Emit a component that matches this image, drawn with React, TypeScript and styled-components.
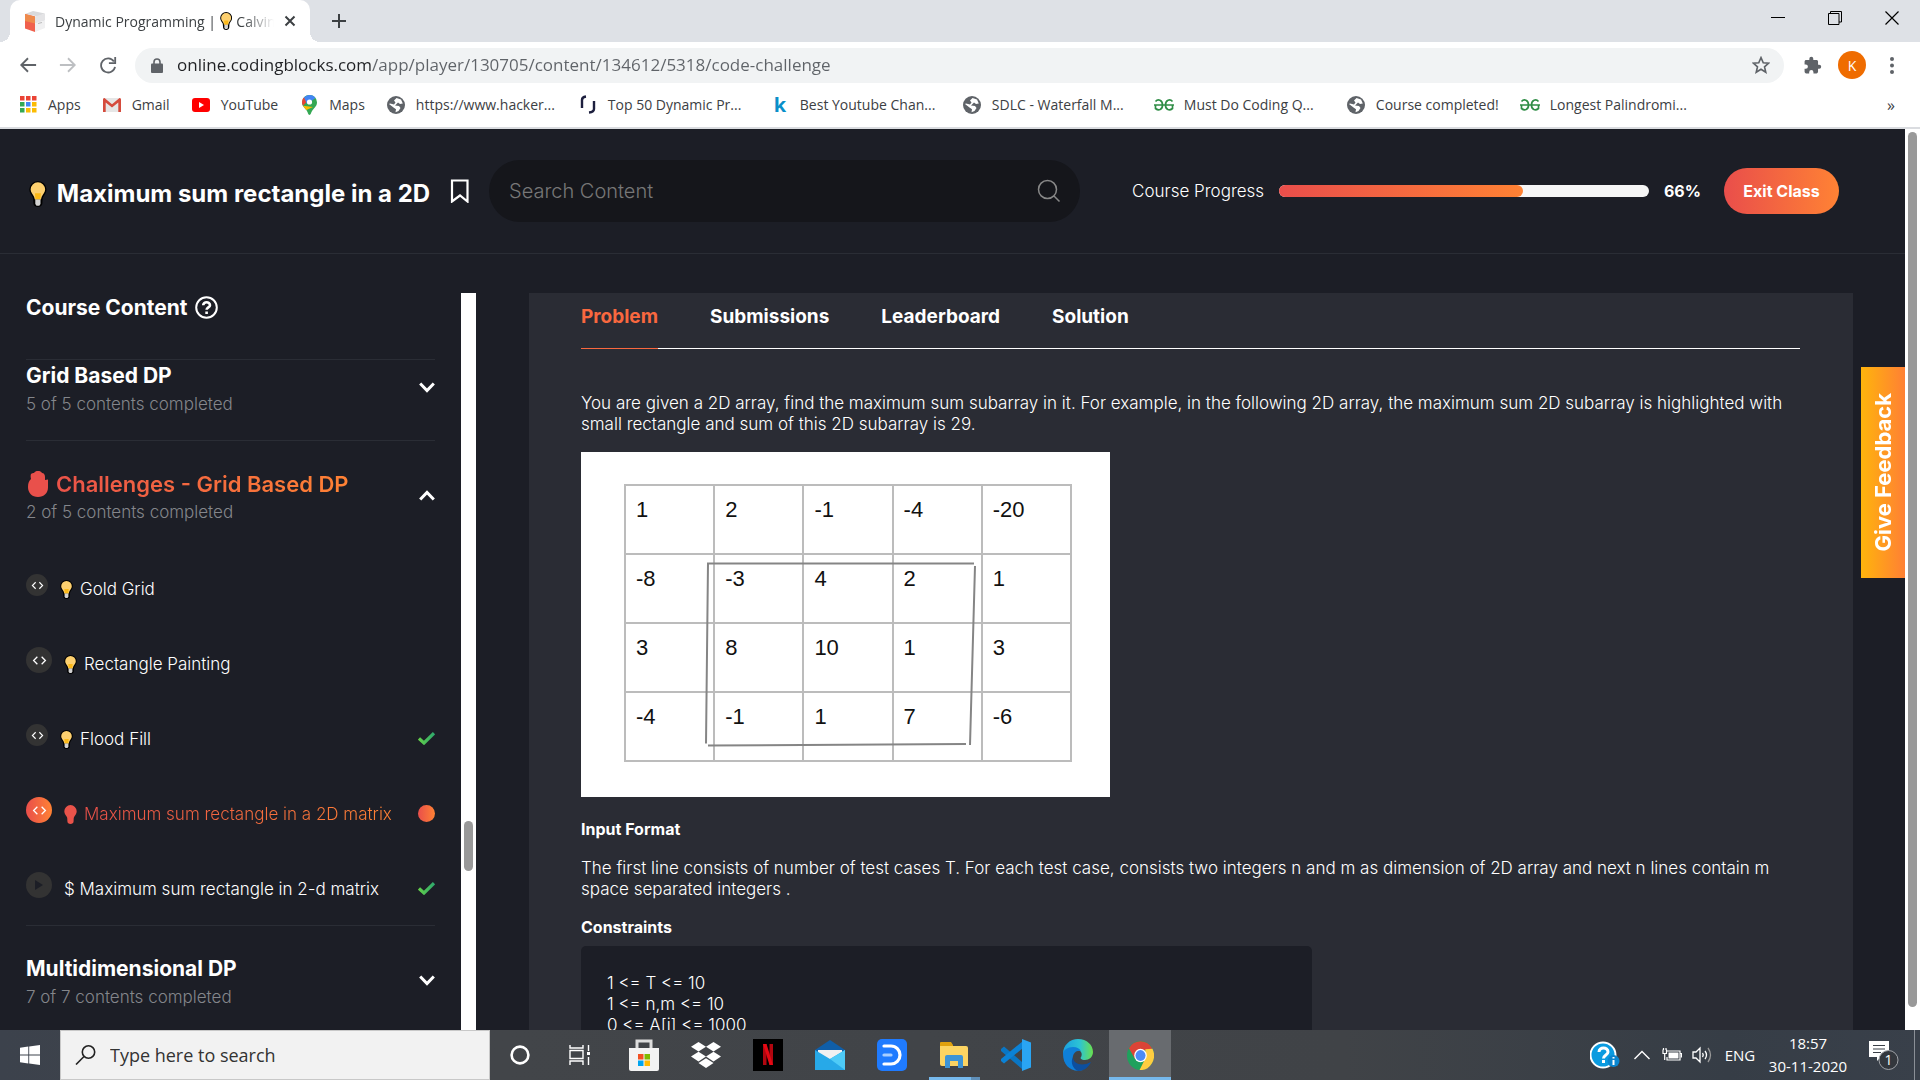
import React from "react";
import styled, { createGlobalStyle, css } from "styled-components";

const ui = `"Open Sans", "Noto Sans", sans-serif`;
const brand = `Inter, "Noto Sans", sans-serif`;
const warm = "linear-gradient(90deg, #e94e4b, #ff8234)";

const GlobalStyle = createGlobalStyle`
  *, *::before, *::after { box-sizing: border-box; }
  body { margin: 0; background: #1c1e26; }
  button { margin: 0; padding: 0; border: 0; background: none; color: inherit; font: inherit; text-align: inherit; cursor: pointer; }
  input { margin: 0; padding: 0; border: 0; background: none; outline: 0; min-width: 0; }
  a { color: inherit; text-decoration: none; }
  h1, h2, h3, p, ul, figure { margin: 0; padding: 0; }
  ul { list-style: none; }
  svg { display: block; flex: none; }
`;

const Desktop = styled.div`
  display: flex;
  flex-direction: column;
  height: 100vh;
  overflow: hidden;
`;

/* ---------- browser window ---------- */

const Chrome = styled.header`
  flex: none;
  background: #fff;
  border-bottom: 2px solid #dadce0;
  font-family: ${ui};
  color: #3c4043;
`;
const TabStrip = styled.div`
  display: flex;
  height: 42px;
  padding-left: 10px;
  background: #dee1e6;
`;
const BrowserTab = styled.div`
  position: relative;
  display: flex;
  align-items: center;
  gap: 10px;
  width: 300px;
  padding: 0 14px 0 14px;
  background: #fff;
  border-radius: 10px 10px 0 0;
  font-size: 14px;
  &::before, &::after {
    content: "";
    position: absolute;
    bottom: 0;
    width: 10px;
    height: 10px;
  }
  &::before { left: -10px; background: radial-gradient(circle at 0 0, transparent 10px, #fff 10px); }
  &::after { right: -10px; background: radial-gradient(circle at 100% 0, transparent 10px, #fff 10px); }
`;
const TabTitle = styled.span`
  display: flex;
  flex: 1;
  align-items: center;
  gap: 4px;
  overflow: hidden;
  white-space: nowrap;
  mask-image: linear-gradient(90deg, #000 86%, transparent 100%);
`;
const StripButton = styled.button`
  display: grid;
  place-items: center;
  width: 57px;
`;
const WindowButtons = styled.div`
  display: flex;
  height: 36px;
  margin-left: auto;
`;
const Toolbar = styled.div`
  display: flex;
  align-items: center;
  height: 46px;
  padding: 0 8px;
`;
const ToolButton = styled.button`
  display: grid;
  place-items: center;
  width: 40px;
  height: 36px;
`;
const AddressBar = styled.label`
  display: flex;
  flex: 1;
  align-items: center;
  gap: 14px;
  height: 35px;
  margin: 0 8px 0 7px;
  padding: 0 14px 0 16px;
  border-radius: 18px;
  background: #f1f3f4;
`;
const AddressInput = styled.input`
  flex: 1;
  padding-bottom: 2px;
  font: 17px ${ui};
  color: transparent;
  background: linear-gradient(90deg, #202124 195px, #5f6368 195px);
  background-clip: text;
`;
const Avatar = styled.span`
  display: grid;
  place-items: center;
  width: 28px;
  height: 28px;
  border-radius: 50%;
  background: #ef6c00;
  color: #fff;
  font-size: 14px;
`;
const Bookmarks = styled.nav`
  display: flex;
  align-items: center;
  gap: 21px;
  height: 39px;
  padding: 0 25px 6px 18px;
  font-size: 14px;
  white-space: nowrap;
`;
const Bookmark = styled.a<{ $long?: boolean }>`
  display: grid;
  grid-template-columns: 20px 1fr;
  gap: 10px;
  align-items: center;
  justify-items: center;
  & > span { justify-self: start; }
  ${(p) => p.$long && css`width: 171px;`}
`;
const KLetter = styled.b`
  color: #0a8fc9;
  font-size: 20px;
  line-height: 20px;
`;
const More = styled.button`
  margin-left: auto;
  font-size: 16px;
`;

/* ---------- page ---------- */

const Viewport = styled.div`
  display: flex;
  flex: 1;
  min-height: 0;
`;
const Page = styled.div`
  position: relative;
  display: flex;
  flex: 1;
  flex-direction: column;
  min-width: 0;
  background: #1c1e26;
  color: #fff;
  font: 300 17px/21px ${brand};
`;
const Track = styled.div<{ $before: number }>`
  flex: none;
  width: 15px;
  padding: ${(p) => p.$before}px 3px 0;
  background: #fff;
`;
const Thumb = styled.div<{ $length: string }>`
  height: ${(p) => p.$length};
  border-radius: 5px;
  background: #999;
`;
const TopBar = styled.div`
  display: flex;
  flex: none;
  align-items: center;
  height: 125px;
  padding-right: 66px;
  border-bottom: 1px solid #2a2d35;
`;
const Lecture = styled.div`
  display: flex;
  flex: none;
  align-items: center;
  gap: 11px;
  width: 489px;
  padding-left: 29px;
`;
const LectureTitle = styled.h1`
  display: flex;
  align-items: center;
  gap: 10px;
  width: 408px;
  padding-top: 6px;
  overflow: hidden;
  font-size: 24px;
  font-weight: 700;
  line-height: 26px;
  white-space: nowrap;
`;
const SearchBox = styled.label`
  display: flex;
  flex: 592 1 0;
  align-items: center;
  height: 62px;
  padding: 0 19px 0 20px;
  border-radius: 31px;
  background: #15161b;
`;
const SearchInput = styled.input`
  flex: 1;
  color: #fff;
  font: 300 20px ${brand};
  &::placeholder { color: #777; opacity: 1; }
`;
const Progress = styled.div`
  display: flex;
  flex: 758 1 0;
  align-items: center;
  gap: 15px;
  padding-left: 52px;
  font-size: 17px;
`;
const Meter = styled.div`
  flex: 1;
  height: 12px;
  border-radius: 6px;
  background: #f6f6f6;
`;
const MeterFill = styled.div`
  height: 100%;
  border-radius: 6px;
  background: ${warm};
`;
const Percent = styled.b`
  font-size: 16px;
  font-weight: 700;
`;
const ExitButton = styled.button`
  width: 115px;
  height: 46px;
  margin-left: 8px;
  border-radius: 23px;
  background: ${warm};
  font-size: 16px;
  font-weight: 700;
  text-align: center;
`;
const Columns = styled.div`
  display: flex;
  flex: 1;
  min-height: 0;
  padding: 39px 52px 0 0;
`;
const Sidebar = styled.aside`
  flex: none;
  width: 461px;
  padding: 0 26px;
  overflow: hidden;
`;
const SidebarTitle = styled.h2`
  display: flex;
  align-items: center;
  gap: 7px;
  height: 66px;
  padding-bottom: 38px;
  font-size: 21px;
  font-weight: 700;
`;
const Section = styled.section<{ $tight?: boolean }>`
  padding-top: ${(p) => (p.$tight ? 2 : 29)}px;
  border-top: 1px solid #2a2d35;
`;
const SectionHeader = styled.button`
  display: flex;
  align-items: center;
  justify-content: space-between;
  width: 100%;
  padding-bottom: 22px;
  & > svg { margin-bottom: 6px; }
`;
const SectionName = styled.span<{ $active?: boolean }>`
  display: flex;
  align-items: center;
  gap: 8px;
  width: max-content;
  font-size: 21px;
  font-weight: 700;
  line-height: 28px;
  ${(p) =>
    p.$active &&
    css`
      padding-left: 2px;
      font-size: 22px;
      font-weight: 600;
      color: transparent;
      background: ${warm};
      background-clip: text;
    `}
`;
const SectionCount = styled.span`
  display: block;
  color: #84868b;
  line-height: 28px;
`;
const Lessons = styled.ul`
  padding-top: 2px;
`;
const Item = styled.a`
  display: flex;
  align-items: center;
  height: 75px;
  padding-top: 4px;
`;
const Badge = styled.span<{ $size: number; $active?: boolean }>`
  display: grid;
  flex: none;
  place-items: center;
  width: ${(p) => p.$size}px;
  height: ${(p) => p.$size}px;
  margin: 0 12px 9px 0;
  border-radius: 50%;
  background: ${(p) => (p.$active ? warm : "#333")};
`;
const ItemName = styled.span<{ $active?: boolean }>`
  display: flex;
  align-items: center;
  gap: 7px;
  white-space: nowrap;
  ${(p) =>
    p.$active &&
    css`
      color: transparent;
      background: ${warm};
      background-clip: text;
    `}
`;
const Status = styled.span`
  margin-left: auto;
  padding-bottom: 3px;
`;
const ActiveDot = styled.span`
  display: block;
  width: 17px;
  height: 17px;
  border-radius: 50%;
  background: ${warm};
`;
const Panel = styled.main`
  flex: 1;
  min-width: 0;
  margin-left: 53px;
  padding: 0 53px 0 52px;
  overflow: hidden;
  background: #2a2c34;
`;
const TabList = styled.div`
  display: flex;
  gap: 52px;
  margin-bottom: 44px;
  border-bottom: 1px solid #fff;
`;
const PanelTab = styled.button<{ $active?: boolean }>`
  margin-bottom: -1px;
  padding: 12px 0 19px;
  border-bottom: 1px solid ${(p) => (p.$active ? "#f9683f" : "#fff")};
  color: ${(p) => (p.$active ? "#f9683f" : "#fff")};
  font-size: 19px;
  font-weight: 700;
  line-height: 24px;
`;
const Figure = styled.figure`
  position: relative;
  width: 529px;
  margin: 17px 0 22px;
  padding: 32px 38px 35px 43px;
  background: #fff;
`;
const Matrix = styled.table`
  width: 448px;
  border-collapse: collapse;
  table-layout: fixed;
  color: #111;
  font: 22px/24px "Liberation Sans", Arial, sans-serif;
`;
const Cell = styled.td`
  height: 69px;
  padding: 12px 10px 0;
  border: 2px solid #bcbcbc;
  vertical-align: top;
`;
const Sketch = styled.svg`
  position: absolute;
  inset: 0;
`;
const Heading = styled.h3`
  margin-bottom: 18px;
  font-size: 16px;
  font-weight: 700;
  line-height: 21px;
`;
const Constraints = styled.div`
  margin-top: 17px;
  & > ${Heading} { margin-bottom: 8px; }
`;
const Code = styled.div`
  width: 60%;
  min-height: 140px;
  padding: 27px 26px;
  border-radius: 5px;
  background: #1c1e26;
`;
const Feedback = styled.button`
  position: absolute;
  top: 238px;
  right: 0;
  display: grid;
  place-items: center;
  width: 44px;
  height: 211px;
  background: linear-gradient(90deg, #ffb40c, #ff8034);
  font-size: 22px;
  font-weight: 700;
`;
const Sideways = styled.span`
  writing-mode: vertical-rl;
  rotate: 180deg;
`;

/* ---------- taskbar ---------- */

const Taskbar = styled.footer`
  display: flex;
  flex: none;
  height: 50px;
  background: linear-gradient(90deg, #3c424c 0, #424549 26%, #404347 70%, #363d46 90%, #39404a 100%);
  color: #fff;
  font: 15px/23px ${ui};
`;
const TaskButton = styled.button<{ $width: number; $on?: boolean }>`
  display: grid;
  place-items: center;
  width: ${(p) => p.$width}px;
  ${(p) =>
    p.$on &&
    css`
      background: #686b6f;
      border-bottom: 3px solid #76b9ed;
      padding-top: 3px;
    `}
`;
const Pinned = styled.div`
  display: flex;
  margin-left: 3px;
`;
const Running = styled.span`
  display: grid;
  place-items: center;
  width: 51px;
  height: 50px;
  padding-top: 3px;
  border-bottom: 3px solid;
  border-image: linear-gradient(90deg, #76b9ed 41px, #5f8fb8 41px) 1;
`;
const WinSearch = styled.label`
  display: flex;
  align-items: center;
  gap: 14px;
  width: 430px;
  padding: 0 14px;
  border: 1px solid #c8c8c8;
  background: #f2f2f2;
`;
const WinSearchInput = styled.input`
  flex: 1;
  font: 18px ${ui};
  &::placeholder { color: #333; opacity: 1; }
`;
const Tray = styled.div`
  display: flex;
  margin-left: auto;
`;
const TrayButton = styled.button<{ $width: number }>`
  display: grid;
  place-content: center;
  width: ${(p) => p.$width}px;
  text-align: center;
`;
const ShowDesktop = styled.button`
  width: 6px;
  border-left: 1px solid #8a8f96;
`;

/* ---------- drawings ---------- */

const Bulb = ({ size = 19, flat = false }: { size?: number; flat?: boolean }) =>
  flat ? (
    <svg width={(size * 13) / 19} height={size} viewBox="0 0 13 19">
      <path fill="#e9534a" d="M6.5 0a6.3 6.3 0 0 1 6.2 6.3c0 2.500-1.700 4-2.600 5.600-.5 1-.4 2.400-.5 4.300 0 1.700-1.300 2.800-3.100 2.800s-3.100-1.100-3.100-2.800c-.1-1.900 0-3.300-.5-4.300C2 10.300.3 8.800.3 6.300A6.300 6.300 0 0 1 6.500 0z" />
    </svg>
  ) : (
    <svg width={(size * 13) / 19} height={size} viewBox="0 0 13 19">
      <path fill="#000" d="M6.500 0a6.300 6.300 0 0 1 6.300 6.300c0 2.500-1.700 4-2.500 5.600-.4 1-.4 2.400-.5 4.300 0 1.700-1.500 2.800-3.300 2.800s-3.300-1.100-3.300-2.800c-.1-1.900-.1-3.300-.5-4.300C1.900 10.300.2 8.800.2 6.300A6.300 6.300 0 0 1 6.500 0z" />
      <path fill="#fdd06f" d="M6.500 1a5.300 5.300 0 0 1 5.300 5.300c0 2.200-1.700 3.600-2.500 5.200l-.6 2H4.300l-.6-2C2.900 9.900 1.200 8.500 1.200 6.300A5.300 5.300 0 0 1 6.500 1z" />
      <path fill="#fcb916" d="M4.300 9h4.400l-.4 4.500H4.700z" />
      <path fill="#d2d2d2" d="M4.600 13.500h3.800v3.300l-.9 1.200h-2l-.9-1.200z" />
    </svg>
  );

const Favicon = () => (
  <svg width="21" height="21" viewBox="0 0 21 21">
    <path fill="#d9dadc" d="M9 0l12 2.500-7 3L1 3z" />
    <path fill="#f0604d" d="M1 3l10 2.500V21L1 17.500z" />
    <path fill="#ee8a4c" d="M1 3l10 2.500v7L1 10z" />
    <path fill="#e4e4e6" d="M11 5.500l10-3v7l-10 3z" />
    <path fill="#f0f0f1" d="M11 12.500l10-3V17l-10 4z" />
    <path stroke="#bbb" d="M14 12.500l4-1" />
  </svg>
);
const Stroke = ({ d, s = 20, c = "#5f6368", w = 2, vb = 20 }: { d: string; s?: number; c?: string; w?: number; vb?: number }) => (
  <svg width={s} height={s} viewBox={`0 0 ${vb} ${vb}`} fill="none" stroke={c} strokeWidth={w}>
    <path d={d} />
  </svg>
);
const AppsIcon = () => (
  <svg width="17" height="17" viewBox="0 0 17 17">
    {["#ea4335", "#ea4335", "#ea4335", "#34a853", "#4285f4", "#fbbc04", "#34a853", "#fbbc04", "#fbbc04"].map((c, i) => (
      <rect key={i} x={(i % 3) * 6} y={Math.floor(i / 3) * 6} width="4.500" height="4.500" fill={c} />
    ))}
  </svg>
);
const GmailIcon = () => (
  <svg width="18" height="14" viewBox="0 0 18 14">
    <path fill="#e6e6e6" d="M1 0h16v14H1z" />
    <path fill="#d54b3d" d="M0 1.500C0 .6.600 0 1.500 0L9 6.200 16.500 0c.9 0 1.500.6 1.500 1.500V14h-2.700V4.500L9 9.400 2.700 4.500V14H0z" />
  </svg>
);
const YouTubeIcon = () => (
  <svg width="18" height="14" viewBox="0 0 18 14">
    <rect width="18" height="14" rx="3" fill="#f00" />
    <path fill="#fff" d="M7 4l5 3-5 3z" />
  </svg>
);
const MapsIcon = () => (
  <svg width="15" height="20" viewBox="0 0 15 20">
    <path fill="#34a853" d="M7.500 0A7.300 7.300 0 0 1 15 7.200c0 3.600-2.400 5.300-4.300 7.800C9.300 16.800 8.800 20 7.500 20S5.700 16.800 4.300 15C2.400 12.500 0 10.800 0 7.200A7.300 7.300 0 0 1 7.500 0z" />
    <path fill="#fbbc04" d="M1 10.800L11 12 4.300 15C3 13.300 1.700 12.200 1 10.800z" />
    <path fill="#ea4335" d="M2 2.500l4 3L1 10.800C-.5 8-.3 4.800 2 2.500z" />
    <path fill="#4285f4" d="M2 2.500C5.500-1.300 11-.5 13.500 3L5 9z" />
    <circle cx="7.500" cy="7" r="2.600" fill="#fff" />
  </svg>
);
const GlobeIcon = () => (
  <svg width="18" height="18" viewBox="0 0 18 18">
    <circle cx="9" cy="9" r="9" fill="#5f6368" />
    <path fill="#fff" d="M9.500 2l4.500 1.500 1.800 4-2.800.5-2-1.500-1.500 1.500L8 9.500l4 .5 1.500 2-2 3-3 1.300.5-3-2.500-1.800L2 8l1-.5 4 1 1.500-2L7 4.500z" />
  </svg>
);
const CsIcon = () => (
  <svg width="16" height="19" viewBox="0 0 16 19" fill="none" stroke="#1d1f3e" strokeWidth="2.400">
    <path d="M2 13V5q0-3 4-3.500M14 6v8q0 3-5 3.500" />
  </svg>
);
const GeeksIcon = () => (
  <svg width="20" height="12" viewBox="0 0 20 12" fill="none" stroke="#2f8d46" strokeWidth="1.700">
    <path d="M0 6h20M1.500 2.500C4-.5 8.500 1 8.500 6S4.500 12 1.500 9.500V6M18.500 2.500C16-.5 11.500 1 11.500 6s4 6 7 3.500V6" />
  </svg>
);
const CheckIcon = () => (
  <svg width="17" height="13" viewBox="0 0 17 13" fill="none" stroke="url(#ok)" strokeWidth="3.200">
    <defs>
      <linearGradient id="ok"><stop offset="0" stopColor="#62cf4a" /><stop offset="1" stopColor="#2fa96c" /></linearGradient>
    </defs>
    <path d="M1 6.500l5 4.500L16 1.200" />
  </svg>
);
const Chevron = ({ up = false }: { up?: boolean }) => (
  <svg width="16" height="11" viewBox="0 0 16 11" fill="none" stroke="#fff" strokeWidth="3">
    <path d={up ? "M1.200 9.500L8 2.500l6.800 7" : "M1.200 1.500L8 8.500l6.800-7"} />
  </svg>
);
const HandIcon = () => (
  <svg width="20" height="26" viewBox="0 0 20 26">
    <path fill="#e9504b" d="M3 3c1-1 2-1 3-1 1-1.500 2-2 4-2s3 .5 4 2c2 0 3 2 3 4v3l3-.5v8C20 22 16 26 10 26S0 22 0 16c0-4 1-6 3-8-.5-2-.5-4 0-5z" />
  </svg>
);
const Brackets = ({ s = 14 }: { s?: number }) => <Stroke s={s} vb={14} w={1.200} c="#fff" d="M5 3.500L1.500 7 5 10.500M9 3.500L12.500 7 9 10.500" />;

const StoreIcon = () => (
  <svg width="30" height="32" viewBox="0 0 30 32">
    <path d="M8 10V2h14v8" fill="none" stroke="#ddd" strokeWidth="3" />
    <path fill="#f3f3f3" d="M0 9h30v21q0 2-2 2H2q-2 0-2-2z" />
    <path fill="#f25022" d="M9 15h5.500v5.500H9z" /><path fill="#7fba00" d="M15.500 15H21v5.500h-5.500z" />
    <path fill="#00a4ef" d="M9 21.500h5.500V27H9z" /><path fill="#ffb900" d="M15.500 21.500H21V27h-5.500z" />
  </svg>
);
const DropboxIcon = () => (
  <svg width="30" height="26" viewBox="0 0 30 26" fill="#fff">
    <path d="M7.500 0L15 4.800 7.500 9.600 0 4.800zM22.500 0L30 4.800l-7.500 4.800L15 4.800zM7.500 9.800L15 14.600l-7.500 4.800L0 14.600zM22.500 9.800l7.500 4.800-7.500 4.800-7.500-4.800zM15 16.200l7.500 4.800L15 26l-7.500-5z" />
  </svg>
);
const NetflixIcon = () => (
  <svg width="30" height="32" viewBox="0 0 30 32">
    <path d="M0 0h30v32H0z" />
    <path fill="#b1060f" d="M10 5h3.500v21H10zM16.500 5H20v21h-3.500z" />
    <path fill="#e50914" d="M10 5h3.500L20 26h-3.500z" />
  </svg>
);
const MailIcon = () => (
  <svg width="30" height="30" viewBox="0 0 30 30">
    <path fill="#0f5ea8" d="M0 10L15 0l15 10v6H0z" />
    <path fill="#f1f1f1" d="M3 10h24v10H3z" />
    <path fill="#27a9e8" d="M0 10l15 9 15-9v20H0z" />
    <path fill="#4ecbf7" d="M30 10v20L15 19z" />
  </svg>
);
const BoardIcon = () => (
  <svg width="30" height="32" viewBox="0 0 30 32">
    <rect width="30" height="32" rx="5" fill="#1f7bff" />
    <path d="M7 7h7a9 9 0 0 1 0 18H7" fill="none" stroke="#fff" strokeWidth="3.200" strokeLinecap="round" />
    <path d="M7 16h7" stroke="#a8ceff" strokeWidth="3.200" strokeLinecap="round" />
  </svg>
);
const ExplorerIcon = () => (
  <svg width="28" height="26" viewBox="0 0 28 26">
    <path fill="#e0a10e" d="M0 1q0-1 1-1h10l2 3v5H0z" />
    <path fill="#fcd462" d="M0 4h26q2 0 2 2v18H2q-2 0-2-2z" />
    <path fill="#3d94d6" d="M5 26V15q0-2 2-2h14q2 0 2 2v11h-5v-7h-8v7z" />
  </svg>
);
const CodeIcon = () => (
  <svg width="30" height="32" viewBox="0 0 30 32">
    <path fill="#0a76c4" d="M0 10l3-2.500L21 23v7L0 12z" />
    <path fill="#0b82d6" d="M0 22l3 2.500L22 9V2L0 20z" />
    <path fill="#2aa5f3" d="M21 0l9 3.500v25L21 32z" />
  </svg>
);
const EdgeIcon = () => (
  <svg width="30" height="32" viewBox="0 0 30 32">
    <defs>
      <linearGradient id="eg"><stop offset="0" stopColor="#1a9fe0" /><stop offset=".55" stopColor="#2cc3d5" /><stop offset="1" stopColor="#6ae04e" /></linearGradient>
    </defs>
    <path fill="url(#eg)" d="M0 15C0 6 7 0 15 0c9 0 15 6 15 13 0 5-4 8-8 8-4 0-5-2-4-3 1.500-2 1-7-4-7-6 0-14 3-14 4z" />
    <path fill="#0f7fd8" d="M0 15c0-4 5-7 10-7 4 0 7 2 8 4-6-1-9 4-8 9 1 6 6 9 10 10C9 34 0 27 0 15z" />
    <path fill="#0d4f9e" d="M10 18c0 7 9 10 18 5-2 5-7 9-13 9-5-2-8-9-5-14z" />
  </svg>
);
const ChromeIcon = () => (
  <svg width="27" height="29" viewBox="0 0 28 28" preserveAspectRatio="none">
    <circle cx="14" cy="14" r="14" fill="#1fa15d" />
    <path fill="#db4437" d="M2 7a14 14 0 0 1 24 0l-2 2H14l-6 8z" />
    <path fill="#ffcd40" d="M26.400 7.500A14 14 0 0 1 13 28l6-11V8z" />
    <circle cx="14" cy="14" r="6.500" fill="#fff" />
    <circle cx="14" cy="14" r="5.200" fill="#4c8bf5" />
  </svg>
);
const TaskViewIcon = () => (
  <svg width="22" height="20" viewBox="0 0 22 20" fill="none" stroke="#fff" strokeWidth="1.400">
    <path d="M1 0v3h13V0M1 20v-4h13v4M1 5.500h13v8H1zM19.500 0v6M19.500 12v8" />
    <path d="M18 7h3v3h-3z" fill="#fff" stroke="none" />
  </svg>
);

/* ---------- content ---------- */

const bookmarks: { text: string; icon: React.ReactNode; long?: boolean }[] = [
  { text: "Apps", icon: <AppsIcon /> },
  { text: "Gmail", icon: <GmailIcon /> },
  { text: "YouTube", icon: <YouTubeIcon /> },
  { text: "Maps", icon: <MapsIcon /> },
  { text: "https://www.hacker...", icon: <GlobeIcon />, long: true },
  { text: "Top 50 Dynamic Pr...", icon: <CsIcon />, long: true },
  { text: "Best Youtube Chan...", icon: <KLetter>k</KLetter>, long: true },
  { text: "SDLC - Waterfall M...", icon: <GlobeIcon />, long: true },
  { text: "Must Do Coding Q...", icon: <GeeksIcon />, long: true },
  { text: "Course completed!", icon: <GlobeIcon /> },
  { text: "Longest Palindromi...", icon: <GeeksIcon />, long: true },
];

type Lesson = { name: string; badge: number; bulb?: boolean; video?: boolean; state?: "done" | "current" };
const lessons: Lesson[] = [
  { name: "Gold Grid", badge: 22, bulb: true },
  { name: "Rectangle Painting", badge: 26, bulb: true },
  { name: "Flood Fill", badge: 22, bulb: true, state: "done" },
  { name: "Maximum sum rectangle in a 2D matrix", badge: 26, bulb: true, state: "current" },
  { name: "$ Maximum sum rectangle in 2-d matrix", badge: 26, video: true, state: "done" },
];

const matrix = [
  [1, 2, -1, -4, -20],
  [-8, -3, 4, 2, 1],
  [3, 8, 10, 1, 3],
  [-4, -1, 1, 7, -6],
];

const BrowserChrome = () => (
  <Chrome>
    <TabStrip>
      <BrowserTab>
        <Favicon />
        <TabTitle>Dynamic Programming | <Bulb size={18} /> Calvin</TabTitle>
        <button aria-label="Close tab"><Stroke s={12} vb={12} c="#3c4043" d="M1.500 1.500l9 9M10.500 1.500l-9 9" /></button>
      </BrowserTab>
      <StripButton aria-label="New tab"><Stroke s={16} vb={16} c="#3c4043" d="M8 1v14M1 8h14" /></StripButton>
      <WindowButtons>
        <StripButton aria-label="Minimize"><Stroke s={14} vb={14} c="#000" w={1} d="M0 6.500h14" /></StripButton>
        <StripButton aria-label="Restore"><Stroke s={14} vb={14} c="#000" w={1} d="M.5 2.500h10.500v11H.5zM2.500 2.500v-2h11v10.500H11" /></StripButton>
        <StripButton aria-label="Close"><Stroke s={14} vb={14} c="#000" w={1.200} d="M.5.5l13 13M13.500.5l-13 13" /></StripButton>
      </WindowButtons>
    </TabStrip>
    <Toolbar>
      <ToolButton aria-label="Back"><Stroke d="M19 10H3M10 2.500L2.500 10l7.500 7.500" s={18} /></ToolButton>
      <ToolButton aria-label="Forward"><Stroke d="M1 10h16M10 2.500l7.500 7.500-7.500 7.500" s={18} c="#bdbfc2" /></ToolButton>
      <ToolButton aria-label="Reload"><Stroke d="M16.500 6A7.800 7.800 0 1 0 17.800 12M18 1v7h-7" s={18} /></ToolButton>
      <AddressBar>
        <svg width="12" height="15" viewBox="0 0 12 15"><path fill="#5f6368" d="M1 5.500h10q1 0 1 1V14q0 1-1 1H1q-1 0-1-1V6.500q0-1 1-1z" /><path d="M3 6V4a3 3 0 0 1 6 0v2" fill="none" stroke="#5f6368" strokeWidth="1.600" /></svg>
        <AddressInput aria-label="Address" readOnly value="online.codingblocks.com/app/player/130705/content/134612/5318/code-challenge" />
        <Stroke s={18} w={1.800} d="M10 1.800l2.500 5.700 6 .5-4.600 4 1.400 6-5.300-3.200L4.700 18l1.400-6-4.600-4 6-.5z" />
      </AddressBar>
      <ToolButton aria-label="Extensions">
        <svg width="19" height="19" viewBox="0 0 24 24" fill="#5f6368"><path d="M20.500 11H19V7c0-1.100-.9-2-2-2h-4V3.500a2.500 2.500 0 0 0-5 0V5H4c-1.100 0-2 .9-2 2v3.800h1.500a2.700 2.700 0 0 1 0 5.400H2V20c0 1.100.9 2 2 2h3.800v-1.500a2.700 2.700 0 0 1 5.400 0V22H17c1.100 0 2-.9 2-2v-4h1.500a2.500 2.500 0 0 0 0-5z" /></svg>
      </ToolButton>
      <ToolButton aria-label="Profile"><Avatar>K</Avatar></ToolButton>
      <ToolButton aria-label="Menu">
        <svg width="4" height="17" viewBox="0 0 4 17" fill="#5f6368"><circle cx="2" cy="2" r="2" /><circle cx="2" cy="8.500" r="2" /><circle cx="2" cy="15" r="2" /></svg>
      </ToolButton>
    </Toolbar>
    <Bookmarks>
      {bookmarks.map((b) => (
        <Bookmark key={b.text} href="#" $long={b.long}>{b.icon}<span>{b.text}</span></Bookmark>
      ))}
      <More aria-label="More bookmarks">»</More>
    </Bookmarks>
  </Chrome>
);

const LessonRow = ({ lesson }: { lesson: Lesson }) => {
  const current = lesson.state === "current";
  return (
    <li>
      <Item href="#">
        <Badge $size={lesson.badge} $active={current}>
          {lesson.video ? <svg width="8" height="10" viewBox="0 0 8 10"><path d="M0 0l8 5-8 5z" fill="#1c1e26" /></svg> : <Brackets s={lesson.badge === 22 ? 13 : 15} />}
        </Badge>
        <ItemName $active={current}>{lesson.bulb && <Bulb flat={current} />}{lesson.name}</ItemName>
        {lesson.state && <Status>{current ? <ActiveDot /> : <CheckIcon />}</Status>}
      </Item>
    </li>
  );
};

const CourseSidebar = () => (
  <Sidebar>
    <SidebarTitle>
      Course Content
      <svg width="23" height="23" viewBox="0 0 23 23" fill="none" stroke="#fff" strokeWidth="2"><circle cx="11.500" cy="11.500" r="10.300" /><path strokeWidth="2.600" d="M8.200 9.200c0-4 6.800-4 6.800 0 0 2.200-3.400 2.300-3.400 4.600M11.600 15.500v2.600" /></svg>
    </SidebarTitle>
    <Section $tight>
      <SectionHeader>
        <span><SectionName>Grid Based DP</SectionName><SectionCount>5 of 5 contents completed</SectionCount></span>
        <Chevron />
      </SectionHeader>
    </Section>
    <Section>
      <SectionHeader>
        <span><SectionName $active><HandIcon />Challenges - Grid Based DP</SectionName><SectionCount>2 of 5 contents completed</SectionCount></span>
        <Chevron up />
      </SectionHeader>
      <Lessons>{lessons.map((l) => <LessonRow key={l.name} lesson={l} />)}</Lessons>
    </Section>
    <Section>
      <SectionHeader>
        <span><SectionName>Multidimensional DP</SectionName><SectionCount>7 of 7 contents completed</SectionCount></span>
        <Chevron />
      </SectionHeader>
    </Section>
  </Sidebar>
);

const ProblemPanel = () => (
  <Panel>
    <TabList role="tablist">
      {["Problem", "Submissions", "Leaderboard", "Solution"].map((t, i) => (
        <PanelTab key={t} role="tab" aria-selected={i === 0} $active={i === 0}>{t}</PanelTab>
      ))}
    </TabList>
    <p>You are given a 2D array, find the maximum sum subarray in it. For example, in the following 2D array, the maximum sum 2D subarray is highlighted with small rectangle and sum of this 2D subarray is 29.</p>
    <Figure>
      <Matrix>
        <tbody>{matrix.map((row, r) => <tr key={r}>{row.map((n, c) => <Cell key={c}>{n}</Cell>)}</tr>)}</tbody>
      </Matrix>
      <Sketch width="529" height="345" viewBox="0 0 529 345" fill="none" stroke="#858585" strokeWidth="2">
        <path d="M126 111.500h267M127 111L125 291.500M127 293.500L385 292M394 114L389 293" />
      </Sketch>
    </Figure>
    <Heading>Input Format</Heading>
    <p>The first line consists of number of test cases T. For each test case, consists two integers n and m as dimension of 2D array and next n lines contain m space separated integers .</p>
    <Constraints>
      <Heading>Constraints</Heading>
      <Code>1 &lt;= T &lt;= 10<br />1 &lt;= n,m &lt;= 10<br />0 &lt;= A[i] &lt;= 1000</Code>
    </Constraints>
  </Panel>
);

const progress = 66;

const WindowsTaskbar = () => (
  <Taskbar>
    <TaskButton $width={60} aria-label="Start">
      <svg width="20" height="20" viewBox="0 0 20 20" fill="#fff"><path d="M0 2.800L8.300 1.600v8H0zM9.200 1.500L20 0v9.600H9.200zM0 10.500h8.300v8L0 17.300zM9.200 10.500H20V20L9.200 18.600z" /></svg>
    </TaskButton>
    <WinSearch>
      <svg width="21" height="20" viewBox="0 0 21 20" fill="none" stroke="#222" strokeWidth="1.600"><circle cx="13.500" cy="7" r="6.200" /><path d="M9 11.500L1 19.500" /></svg>
      <WinSearchInput aria-label="Search Windows" placeholder="Type here to search" />
    </WinSearch>
    <TaskButton $width={60} aria-label="Cortana">
      <svg width="20" height="20" viewBox="0 0 20 20" fill="none" stroke="#fff" strokeWidth="2.600"><circle cx="10" cy="10" r="8.400" /></svg>
    </TaskButton>
    <TaskButton $width={60} aria-label="Task view"><TaskViewIcon /></TaskButton>
    <Pinned>
      <TaskButton $width={62} aria-label="Microsoft Store"><StoreIcon /></TaskButton>
      <TaskButton $width={62} aria-label="Dropbox"><DropboxIcon /></TaskButton>
      <TaskButton $width={62} aria-label="Netflix"><NetflixIcon /></TaskButton>
      <TaskButton $width={62} aria-label="Mail"><MailIcon /></TaskButton>
      <TaskButton $width={62} aria-label="EdrawMax"><BoardIcon /></TaskButton>
      <TaskButton $width={62} aria-label="File Explorer"><Running><ExplorerIcon /></Running></TaskButton>
      <TaskButton $width={62} aria-label="Visual Studio Code"><CodeIcon /></TaskButton>
      <TaskButton $width={62} aria-label="Edge"><EdgeIcon /></TaskButton>
      <TaskButton $width={62} $on aria-label="Chrome"><ChromeIcon /></TaskButton>
    </Pinned>
    <Tray>
      <TrayButton $width={42} aria-label="Help">
        <svg width="30" height="28" viewBox="0 0 30 28"><circle cx="13" cy="14" r="12.500" fill="#0b9be0" stroke="#fff" strokeWidth="2" /><path d="M9 11c0-5.500 9-5.500 9 0 0 3-4.500 3-4.500 6.500M13.500 19v3" fill="none" stroke="#fff" strokeWidth="3" /><circle cx="23.500" cy="20" r="6" fill="#0b86cf" /><path d="M23.500 16v1.600M23.500 19v5" stroke="#fff" strokeWidth="2" /></svg>
      </TrayButton>
      <TrayButton $width={32} aria-label="Hidden icons"><Stroke s={16} vb={16} w={1.400} c="#fff" d="M.5 12L8 4.500l7.500 7.500" /></TrayButton>
      <TrayButton $width={28} aria-label="Battery">
        <svg width="20" height="14" viewBox="0 0 20 14" fill="none" stroke="#fff" strokeWidth="1.200"><path d="M5 3h13v9H5V9M18.500 5.500h1v4M1 1.500v4h3.500v-4M1.500 0v2M4 0v2M2.700 6v6" /><path fill="#fff" stroke="none" d="M6.500 4.500h10v6h-10z" /></svg>
      </TrayButton>
      <TrayButton $width={32} aria-label="Volume">
        <svg width="21" height="18" viewBox="0 0 21 18" fill="none" stroke="#fff" strokeWidth="1.300"><path d="M1 6h3l4-4v14l-4-4H1zM10.500 7q1.500 2 0 4M13 5q3 4 0 8" /><path stroke="#999" d="M16 2q5 7 0 14" /></svg>
      </TrayButton>
      <TrayButton $width={44}>ENG</TrayButton>
      <TrayButton $width={92}><span>18:57</span><span>30-11-2020</span></TrayButton>
      <TrayButton $width={60} aria-label="Notifications">
        <svg width="30" height="30" viewBox="0 0 30 30"><path fill="#fff" d="M0 1h20v16h-8l-4 4v-4H0z" /><path stroke="#3a4048" strokeWidth="1.200" d="M4 5.500h12M4 9h12M4 12.500h8" /><circle cx="19.500" cy="20" r="9.500" fill="#33373d" stroke="#a0a3a8" /><text x="19.500" y="25" fill="#fff" fontSize="14" fontFamily="Open Sans" textAnchor="middle">1</text></svg>
      </TrayButton>
      <ShowDesktop aria-label="Show desktop" />
    </Tray>
  </Taskbar>
);

export default function App() {
  return (
    <Desktop>
      <GlobalStyle />
      <BrowserChrome />
      <Viewport>
        <Page>
          <TopBar>
            <Lecture>
              <LectureTitle><Bulb size={26} />Maximum sum rectangle in a 2D</LectureTitle>
              <button aria-label="Bookmark"><Stroke s={24} vb={24} w={2.200} c="#fff" d="M4 1.500h15.500v21L12 16.500 4 22.500z" /></button>
            </Lecture>
            <SearchBox>
              <SearchInput aria-label="Search Content" placeholder="Search Content" />
              <Stroke s={24} vb={24} w={1.500} c="#888" d="M10.500 1.500a9 9 0 1 1 0 18 9 9 0 0 1 0-18zM17 17l5.500 5.500" />
            </SearchBox>
            <Progress>
              Course Progress
              <Meter role="progressbar" aria-valuenow={progress}><MeterFill style={{ width: `${progress}%` }} /></Meter>
              <Percent>{progress}%</Percent>
              <ExitButton>Exit Class</ExitButton>
            </Progress>
          </TopBar>
          <Columns>
            <CourseSidebar />
            <Track $before={528}><Thumb $length="50px" /></Track>
            <ProblemPanel />
          </Columns>
          <Feedback><Sideways>Give Feedback</Sideways></Feedback>
        </Page>
        <Track $before={3}><Thumb $length="calc(100% - 23px)" /></Track>
      </Viewport>
      <WindowsTaskbar />
    </Desktop>
  );
}
